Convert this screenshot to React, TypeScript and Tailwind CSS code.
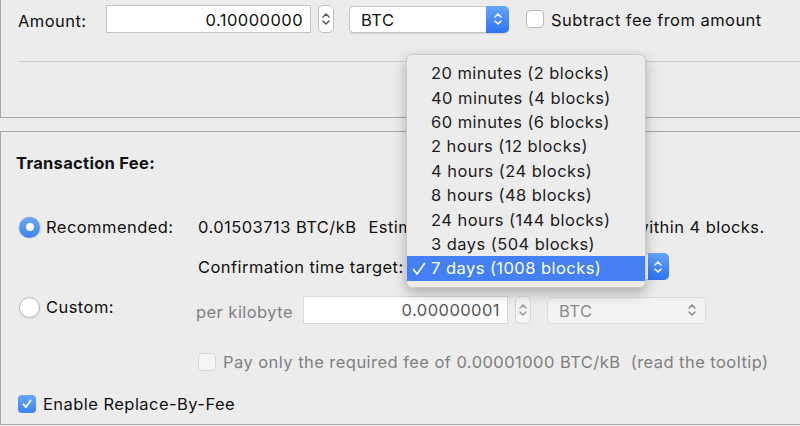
import React from "react";

const FONT = "font-['Inter','Liberation_Sans',sans-serif]";

const Chevrons = ({ color, className }: { color: string; className?: string }) => (
  <svg viewBox="0 0 10 16" className={className} fill="none" stroke={color} strokeWidth={1.5} strokeLinecap="round" strokeLinejoin="round">
    <path d="M2 6L5 3L8 6" />
    <path d="M2 10L5 13L8 10" />
  </svg>
);

const Stepper = ({ disabled }: { disabled?: boolean }) => (
  <div
    className={`flex h-[28px] w-[16px] items-center justify-center rounded-[5px] border ${
      disabled ? "border-[#d6d6d6] bg-[#f4f4f4]" : "border-[#c2c2c2] bg-white"
    }`}
  >
    <Chevrons color={disabled ? "#9a9a9a" : "#555"} className="h-[22px] w-[10px]" />
  </div>
);

const UnitPopup = ({ width, disabled }: { width: string; disabled?: boolean }) => (
  <div
    className={`flex h-[27px] items-center justify-between rounded-[5px] ${width} ${
      disabled
        ? "border border-[#dcdcdc] bg-[#f3f3f3] text-[#8a8a8a]"
        : "border border-[#c6c6c6] bg-white shadow-[0_1px_1px_rgba(0,0,0,0.12)]"
    }`}
  >
    <span className="pl-[11px] pt-[2px]">BTC</span>
    {disabled ? (
      <Chevrons color="#8a8a8a" className="mr-[8px] h-[22px] w-[10px]" />
    ) : (
      <div className="flex h-[27px] w-[23px] items-center justify-center rounded-r-[5px] bg-gradient-to-b from-[#66a4fa] to-[#2f73f2] -mr-px -my-px">
        <Chevrons color="#fff" className="h-[22px] w-[10px]" />
      </div>
    )}
  </div>
);

const Radio = ({ checked }: { checked?: boolean }) =>
  checked ? (
    <div className="flex h-[21px] w-[21px] shrink-0 items-center justify-center rounded-full bg-gradient-to-b from-[#6aa7f5] to-[#3b84ef] shadow-[0_0_0_0.5px_rgba(0,0,0,0.15)]">
      <div className="h-[8px] w-[8px] rounded-full bg-white" />
    </div>
  ) : (
    <div className="h-[21px] w-[21px] shrink-0 rounded-full border border-[#b8b8b8] bg-white shadow-[0_1px_1px_rgba(0,0,0,0.08)]" />
  );

const menuItems = [
  "20 minutes (2 blocks)",
  "40 minutes (4 blocks)",
  "60 minutes (6 blocks)",
  "2 hours (12 blocks)",
  "4 hours (24 blocks)",
  "8 hours (48 blocks)",
  "24 hours (144 blocks)",
  "3 days (504 blocks)",
  "7 days (1008 blocks)",
];

export default function App() {
  return (
    <div
      className={`relative h-[426px] w-[800px] overflow-hidden bg-[#ececec] text-[16.5px] leading-[20px] tracking-[0.45px] text-[#111] ${FONT}`}
    >
      {/* amount panel */}
      <div className="h-[118px] border-b border-l border-[#a9a9a9] pt-[5px]">
        <div className="flex items-center pl-[17px]">
          <span className="w-[88px] pt-[3px]">Amount:</span>
          <div className="flex h-[28px] w-[205px] items-center justify-end border border-[#c4c4c4] bg-white pr-[7px] pt-[1px]">
            0.10000000
          </div>
          <div className="ml-[7px]">
            <Stepper />
          </div>
          <div className="ml-[15px]">
            <UnitPopup width="w-[160px]" />
          </div>
          <div className="ml-[17px] h-[18px] w-[18px] rounded-[4px] border border-[#b9b9b9] bg-white" />
          <span className="ml-[7px] whitespace-nowrap pt-[2px]">Subtract fee from amount</span>
        </div>
        <div className="ml-[17px] mt-[28px] h-px bg-[#cfcfcf]" />
      </div>

      {/* fee panel */}
      <div className="mt-[13px] h-[294px] border-b border-l border-t border-[#a9a9a9] pt-[21px]">
        <div className="pl-[15px] font-bold tracking-[0.3px]">Transaction Fee:</div>

        <div className="mt-[44px] flex">
          <div className="flex h-[20px] w-[197px] items-center pl-[18px]">
            <Radio checked />
            <span className="ml-[6px]">Recommended:</span>
          </div>
          <div className="flex flex-col">
            <div className="flex whitespace-nowrap">
              <span>0.01503713 BTC/kB</span>
              <span className="ml-[12px]">Estimated to begin confirmation within 4 blocks.</span>
            </div>
            <div className="mt-[16px] flex h-[27px] items-center">
              <span className="whitespace-nowrap">Confirmation time target:</span>
              <div className="ml-[3px] flex h-[27px] w-[262px] items-center justify-end rounded-[5px] border border-[#c6c6c6] bg-white">
                <div className="flex h-[27px] w-[21px] items-center justify-center rounded-r-[5px] bg-gradient-to-b from-[#66a4fa] to-[#2f73f2] -mr-px">
                  <Chevrons color="#fff" className="h-[22px] w-[10px]" />
                </div>
              </div>
            </div>
          </div>
        </div>

        <div className="mt-[16px] flex h-[28px]">
          <div className="flex w-[195px] items-start pl-[18px] pt-px">
            <Radio />
            <span className="ml-[6px]">Custom:</span>
          </div>
          <div className="flex items-center text-[#808080]">
            <span className="w-[107px] whitespace-nowrap pt-[3px]">per kilobyte</span>
            <div className="flex h-[28px] w-[205px] items-center justify-end border border-[#d8d8d8] bg-white pr-[7px] text-[#555]">
              0.00000001
            </div>
            <div className="ml-[7px]">
              <Stepper disabled />
            </div>
            <div className="ml-[16px]">
              <UnitPopup width="w-[159px]" disabled />
            </div>
          </div>
        </div>

        <div className="ml-[197px] mt-[29px] flex h-[18px] items-center text-[#808080]">
          <div className="h-[18px] w-[18px] shrink-0 rounded-[4px] border border-[#d6d6d6] bg-[#f4f4f4]" />
          <span className="ml-[7px] whitespace-nowrap">
            Pay only the required fee of 0.00001000 BTC/kB&nbsp;&nbsp;(read the tooltip)
          </span>
        </div>

        <div className="ml-[17px] mt-[24px] flex h-[18px] items-center">
          <div className="flex h-[18px] w-[18px] items-center justify-center rounded-[4px] bg-gradient-to-b from-[#66a4fa] to-[#3b84ef]">
            <svg viewBox="0 0 12 12" className="h-[12px] w-[12px]" fill="none" stroke="#fff" strokeWidth={1.8} strokeLinecap="round" strokeLinejoin="round">
              <path d="M2.5 6.5L5 9L9.5 2.5" />
            </svg>
          </div>
          <span className="ml-[7px]">Enable Replace-By-Fee</span>
        </div>
      </div>

      {/* open popup menu */}
      <div className="absolute left-[406px] top-[54px] w-[240px] rounded-[6px] border border-[#c9c9c9] bg-[#ececec] py-[6px] shadow-[0_5px_14px_rgba(0,0,0,0.28)]">
        {menuItems.map((item, i) => {
          const selected = i === menuItems.length - 1;
          return (
            <div
              key={item}
              className={`relative flex h-[24.4px] items-center whitespace-nowrap pl-[24px] ${
                selected ? "bg-[#447ff3] text-white" : "text-[#1c1c1c]"
              }`}
            >
              {selected && (
                <svg viewBox="0 0 14 14" className="absolute left-[5px] top-[6px] h-[14px] w-[14px]" fill="none" stroke="#fff" strokeWidth={1.7} strokeLinecap="round" strokeLinejoin="round">
                  <path d="M1.5 7.5L5 12L12.5 1.5" />
                </svg>
              )}
              {item}
            </div>
          );
        })}
      </div>
    </div>
  );
}
